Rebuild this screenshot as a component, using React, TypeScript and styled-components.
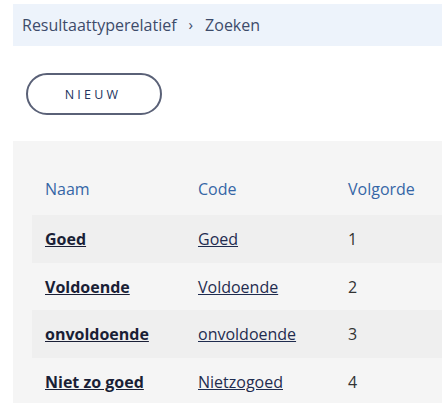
import React from "react";
import styled, { createGlobalStyle } from "styled-components";

const GlobalStyle = createGlobalStyle`
  body {
    margin: 0;
    background: #fff;
    font-family: "Open Sans", "Liberation Sans", sans-serif;
  }
`;

const rows = [
  { naam: "Goed", code: "Goed", volgorde: 1 },
  { naam: "Voldoende", code: "Voldoende", volgorde: 2 },
  { naam: "onvoldoende", code: "onvoldoende", volgorde: 3 },
  { naam: "Niet zo goed", code: "Nietzogoed", volgorde: 4 },
];

export default function App() {
  return (
    <>
      <GlobalStyle />
      <Page>
        <Breadcrumb>
          <Crumb>Resultaattyperelatief</Crumb>
          <Separator>›</Separator>
          <Crumb>Zoeken</Crumb>
        </Breadcrumb>

        <Actions>
          <NewButton>NIEUW</NewButton>
        </Actions>

        <Panel>
          <Table>
            <thead>
              <tr>
                <HeadCell $width={140}>Naam</HeadCell>
                <HeadCell $width={137}>Code</HeadCell>
                <HeadCell>Volgorde</HeadCell>
              </tr>
            </thead>
            <tbody>
              {rows.map((r, i) => (
                <Row key={r.code} $striped={i % 2 === 0}>
                  <Cell><NameLink href="#">{r.naam}</NameLink></Cell>
                  <Cell><CodeLink href="#">{r.code}</CodeLink></Cell>
                  <Cell>{r.volgorde}</Cell>
                </Row>
              ))}
            </tbody>
          </Table>
        </Panel>
      </Page>
    </>
  );
}

const Page = styled.div`
  padding: 4px 0 0 13px;
  width: 429px;
`;

const Breadcrumb = styled.nav`
  display: flex;
  align-items: center;
  gap: 12px;
  height: 42px;
  padding-left: 9px;
  background: #edf3fb;
  font-size: 16px;
  color: #3d4b6a;
`;

const Crumb = styled.span``;

const Separator = styled.span`
  font-size: 15px;
  margin-top: -2px;
`;

const Actions = styled.div`
  padding: 27px 0 26px 13px;
`;

const NewButton = styled.button`
  width: 136px;
  height: 42px;
  border: 2px solid #5a6177;
  border-radius: 21px;
  background: #fff;
  font-family: inherit;
  font-size: 12.5px;
  letter-spacing: 3.2px;
  padding-left: 4px;
  color: #22345e;
  cursor: pointer;
`;

const Panel = styled.div`
  background: #f5f5f5;
  padding: 22px 0 0 19px;
  overflow: hidden;
`;

const Table = styled.table`
  border-collapse: collapse;
  width: 100%;
  table-layout: fixed;
`;

const HeadCell = styled.th<{ $width?: number }>`
  text-align: left;
  font-weight: normal;
  font-size: 16px;
  color: #3566a6;
  height: 52px;
  padding: 0 0 0 13px;
  width: ${(p) => (p.$width ? `${p.$width}px` : "auto")};
`;

const Row = styled.tr<{ $striped: boolean }>`
  background: ${(p) => (p.$striped ? "#efefef" : "transparent")};
  height: 47.7px;
`;

const Cell = styled.td`
  padding: 0 0 0 13px;
  font-size: 16px;
  color: #333;
  white-space: nowrap;
`;

const NameLink = styled.a`
  color: #1a1f36;
  font-weight: 700;
  text-decoration: underline;
`;

const CodeLink = styled.a`
  color: #1f2c4f;
  text-decoration: underline;
`;
